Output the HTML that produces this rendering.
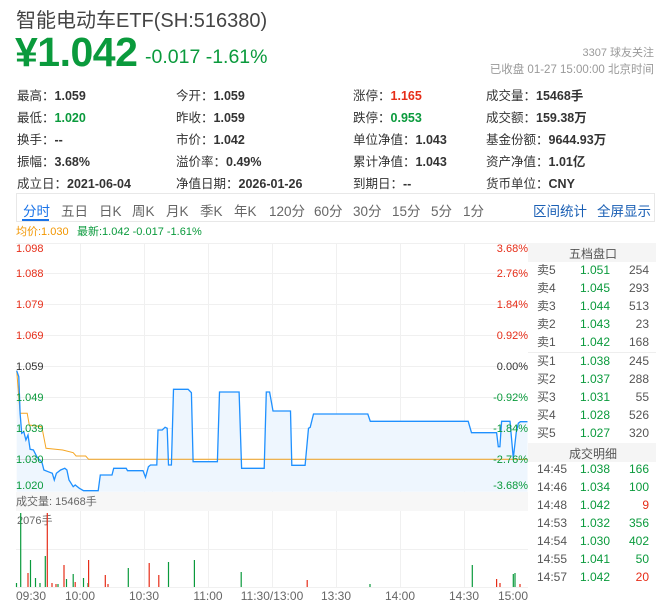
<!DOCTYPE html>
<html><head><meta charset="utf-8"><style>
*{margin:0;padding:0;box-sizing:border-box}
body{width:656px;height:615px;background:#fff;font-family:"Liberation Sans","Noto Sans CJK SC",sans-serif;color:#333;position:relative;overflow:hidden}
.a{position:absolute;white-space:nowrap}
.g{color:#0a9a3c}.r{color:#e62d18}
.info{font-size:12.5px}
.info b{font-weight:bold}
.tab{font-size:13.5px;color:#666;top:200px}
</style></head><body>
<div class="a" style="left:16px;top:4px;font-size:20px;color:#444">智能电动车ETF(SH:516380)</div>
<div class="a g" style="left:15px;top:29px;font-size:41px;font-weight:bold;letter-spacing:-0.5px">¥1.042</div>
<div class="a g" style="left:145px;top:46px;font-size:19.5px">-0.017 -1.61%</div>
<div class="a" style="right:2px;top:44px;font-size:11px;color:#999">3307 球友关注</div>
<div class="a" style="right:2px;top:61px;font-size:11.5px;color:#999">已收盘 01-27 15:00:00 北京时间</div>

<div class="info">
<div class="a" style="left:17px;top:85px">最高：<b>1.059</b></div>
<div class="a" style="left:17px;top:107px">最低：<b class="g">1.020</b></div>
<div class="a" style="left:17px;top:129px">换手：<b>--</b></div>
<div class="a" style="left:17px;top:151px">振幅：<b>3.68%</b></div>
<div class="a" style="left:17px;top:173px">成立日：<b>2021-06-04</b></div>
<div class="a" style="left:176px;top:85px">今开：<b>1.059</b></div>
<div class="a" style="left:176px;top:107px">昨收：<b>1.059</b></div>
<div class="a" style="left:176px;top:129px">市价：<b>1.042</b></div>
<div class="a" style="left:176px;top:151px">溢价率：<b>0.49%</b></div>
<div class="a" style="left:176px;top:173px">净值日期：<b>2026-01-26</b></div>
<div class="a" style="left:353px;top:85px">涨停：<b class="r">1.165</b></div>
<div class="a" style="left:353px;top:107px">跌停：<b class="g">0.953</b></div>
<div class="a" style="left:353px;top:129px">单位净值：<b>1.043</b></div>
<div class="a" style="left:353px;top:151px">累计净值：<b>1.043</b></div>
<div class="a" style="left:353px;top:173px">到期日：<b>--</b></div>
<div class="a" style="left:486px;top:85px">成交量：<b>15468手</b></div>
<div class="a" style="left:486px;top:107px">成交额：<b>159.38万</b></div>
<div class="a" style="left:486px;top:129px">基金份额：<b>9644.93万</b></div>
<div class="a" style="left:486px;top:151px">资产净值：<b>1.01亿</b></div>
<div class="a" style="left:486px;top:173px">货币单位：<b>CNY</b></div>
</div>

<div class="a" style="left:16px;top:193px;width:639px;height:29px;border:1px solid #e8e8e8"></div>
<div class="a tab" style="left:23px;color:#1a73e8">分时</div>
<div class="a" style="left:22px;top:219px;width:27px;height:2px;background:#1a73e8"></div>
<div class="a tab" style="left:61px">五日</div>
<div class="a tab" style="left:99px">日K</div>
<div class="a tab" style="left:132px">周K</div>
<div class="a tab" style="left:166px">月K</div>
<div class="a tab" style="left:200px">季K</div>
<div class="a tab" style="left:234px">年K</div>
<div class="a tab" style="left:269px">120分</div>
<div class="a tab" style="left:314px">60分</div>
<div class="a tab" style="left:353px">30分</div>
<div class="a tab" style="left:392px">15分</div>
<div class="a tab" style="left:431px">5分</div>
<div class="a tab" style="left:463px">1分</div>
<div class="a tab" style="left:533px;color:#1a5fb4">区间统计</div>
<div class="a tab" style="left:597px;color:#1a5fb4">全屏显示</div>
<div class="a" style="left:16px;top:223px;font-size:11px;color:#f29600">均价:1.030</div>
<div class="a" style="left:77px;top:223px;font-size:11px"><span style="color:#0a9a3c">最新:1.042 -0.017 -1.61%</span></div>

<svg class="a" style="left:0;top:0" width="656" height="615" font-family="Liberation Sans, Noto Sans CJK SC, sans-serif">
<g stroke="#f0f0f0" stroke-width="1">
<line x1="16" y1="243.5" x2="528" y2="243.5"/><line x1="16" y1="273.5" x2="528" y2="273.5"/><line x1="16" y1="304.5" x2="528" y2="304.5"/><line x1="16" y1="335.5" x2="528" y2="335.5"/><line x1="16" y1="366.5" x2="528" y2="366.5"/><line x1="16" y1="397.5" x2="528" y2="397.5"/><line x1="16" y1="428.5" x2="528" y2="428.5"/><line x1="16" y1="459.5" x2="528" y2="459.5"/>
<line x1="16" y1="549.5" x2="528" y2="549.5"/><line x1="16" y1="587.5" x2="528" y2="587.5"/>
<line x1="80.5" y1="243" x2="80.5" y2="492"/><line x1="144.5" y1="243" x2="144.5" y2="492"/><line x1="208.5" y1="243" x2="208.5" y2="492"/><line x1="272.5" y1="243" x2="272.5" y2="492"/><line x1="336.5" y1="243" x2="336.5" y2="492"/><line x1="400.5" y1="243" x2="400.5" y2="492"/><line x1="464.5" y1="243" x2="464.5" y2="492"/>
<line x1="80.5" y1="511" x2="80.5" y2="587"/><line x1="144.5" y1="511" x2="144.5" y2="587"/><line x1="208.5" y1="511" x2="208.5" y2="587"/><line x1="272.5" y1="511" x2="272.5" y2="587"/><line x1="336.5" y1="511" x2="336.5" y2="587"/><line x1="400.5" y1="511" x2="400.5" y2="587"/><line x1="464.5" y1="511" x2="464.5" y2="587"/>
</g>
<rect x="16" y="492" width="512" height="19" fill="#f7f7f7"/>
<rect x="528" y="243" width="128" height="19" fill="#f5f5f5"/>
<rect x="528" y="443" width="128" height="19" fill="#f5f5f5"/>
<line x1="528" y1="352.5" x2="656" y2="352.5" stroke="#eee"/>
<path d="M16.7,370.7 L18.8,376.7 20.1,413.3 21.7,433.3 23.8,431.7 25.9,440 28,435 30.1,449.3 33.4,450 36.8,456.7 39.7,460 41.8,461.7 43.9,470 48.1,471.7 52.3,473.3 54.3,480 56.4,473.3 60.6,470 64.8,468.3 66.9,470 69,480 73.2,486.7 75.2,485 79.4,488.3 83.6,490.7 98.2,490.7 100.3,475 112,475 113.7,468.3 126.2,468.3 127.5,470.7 143,470.7 145.5,477.3 148.4,466.7 150.5,465 156.8,465 158,430 162.2,430 165.1,427.3 167.2,428.3 168.5,465 171.4,465 173.5,389.3 188.1,389.3 191.4,392.7 193.1,461.7 217.4,461.7 219.5,392 239.1,392 241.6,468.3 264.2,468.3 266.3,392 269.6,392 273,411 290.5,411 291.8,465.3 305.1,465.3 308.5,428.3 310.2,427.3 313.5,414 367.8,414 370.3,421.3 468.2,421.3 471.5,432.7 496.6,432.7 498.3,446.7 499.9,446.7 501.6,421.3 510,421.3 513.3,458.3 516.2,432.7 518.3,423.3 520.4,421.7 527.5,421.7 L527.5,491.7 L16.7,491.7Z" fill="#eef6fe"/>
<line x1="16" y1="459.5" x2="528" y2="459.5" stroke="#bbb" stroke-width="0.6"/>
<polyline fill="none" stroke="#f5a623" stroke-width="1" points="16.7,370.7 20.1,413.3 27.2,413.3 29.3,425 41.8,426.7 46,448.3 62.7,450 73.2,452.7 76.1,456 85.7,456 88.6,459.3 527.5,459.3"/>
<polyline fill="none" stroke="#1e90ff" stroke-width="1.3" points="16.7,370.7 18.8,376.7 20.1,413.3 21.7,433.3 23.8,431.7 25.9,440 28,435 30.1,449.3 33.4,450 36.8,456.7 39.7,460 41.8,461.7 43.9,470 48.1,471.7 52.3,473.3 54.3,480 56.4,473.3 60.6,470 64.8,468.3 66.9,470 69,480 73.2,486.7 75.2,485 79.4,488.3 83.6,490.7 98.2,490.7 100.3,475 112,475 113.7,468.3 126.2,468.3 127.5,470.7 143,470.7 145.5,477.3 148.4,466.7 150.5,465 156.8,465 158,430 162.2,430 165.1,427.3 167.2,428.3 168.5,465 171.4,465 173.5,389.3 188.1,389.3 191.4,392.7 193.1,461.7 217.4,461.7 219.5,392 239.1,392 241.6,468.3 264.2,468.3 266.3,392 269.6,392 273,411 290.5,411 291.8,465.3 305.1,465.3 308.5,428.3 310.2,427.3 313.5,414 367.8,414 370.3,421.3 468.2,421.3 471.5,432.7 496.6,432.7 498.3,446.7 499.9,446.7 501.6,421.3 510,421.3 513.3,458.3 516.2,432.7 518.3,423.3 520.4,421.7 527.5,421.7"/>
<g font-size="11">
<text x="16" y="252" fill="#e62d18">1.098</text><text x="16" y="277" fill="#e62d18">1.088</text><text x="16" y="308" fill="#e62d18">1.079</text><text x="16" y="339" fill="#e62d18">1.069</text><text x="16" y="370" fill="#333">1.059</text><text x="16" y="401" fill="#0a9a3c">1.049</text><text x="16" y="432" fill="#0a9a3c">1.039</text><text x="16" y="463" fill="#0a9a3c">1.030</text><text x="16" y="489" fill="#0a9a3c">1.020</text>
<g text-anchor="end"><text x="528" y="252" fill="#e62d18">3.68%</text><text x="528" y="277" fill="#e62d18">2.76%</text><text x="528" y="308" fill="#e62d18">1.84%</text><text x="528" y="339" fill="#e62d18">0.92%</text><text x="528" y="370" fill="#333">0.00%</text><text x="528" y="401" fill="#0a9a3c">-0.92%</text><text x="528" y="432" fill="#0a9a3c">-1.84%</text><text x="528" y="463" fill="#0a9a3c">-2.76%</text><text x="528" y="489" fill="#0a9a3c">-3.68%</text></g>
<text x="16" y="505" fill="#666">成交量: 15468手</text>
<text x="17" y="524" fill="#666">2076手</text>
<g fill="#666" font-size="12"><text x="16" y="600">09:30</text><text x="80" y="600" text-anchor="middle">10:00</text><text x="144" y="600" text-anchor="middle">10:30</text><text x="208" y="600" text-anchor="middle">11:00</text><text x="272" y="600" text-anchor="middle">11:30/13:00</text><text x="336" y="600" text-anchor="middle">13:30</text><text x="400" y="600" text-anchor="middle">14:00</text><text x="464" y="600" text-anchor="middle">14:30</text><text x="528" y="600" text-anchor="end">15:00</text></g>
</g>
<g stroke-width="1.2">
<g stroke="#0a9a3c"><line x1="20.7" y1="587" x2="20.7" y2="513"/><line x1="16.5" y1="587" x2="16.5" y2="583"/><line x1="30.5" y1="587" x2="30.5" y2="560"/><line x1="35.5" y1="587" x2="35.5" y2="578"/><line x1="45.3" y1="587" x2="45.3" y2="556"/><line x1="66.5" y1="587" x2="66.5" y2="579"/><line x1="73.2" y1="587" x2="73.2" y2="574"/><line x1="83.5" y1="587" x2="83.5" y2="578"/><line x1="128.3" y1="587" x2="128.3" y2="568"/><line x1="168.5" y1="587" x2="168.5" y2="562"/><line x1="194.4" y1="587" x2="194.4" y2="560"/><line x1="241.2" y1="587" x2="241.2" y2="572"/><line x1="370" y1="587" x2="370" y2="584"/><line x1="472.3" y1="587" x2="472.3" y2="565"/><line x1="513.3" y1="587" x2="513.3" y2="574"/><line x1="515" y1="587" x2="515" y2="573"/><line x1="40" y1="587" x2="40" y2="583"/><line x1="58" y1="587" x2="58" y2="584"/><line x1="88" y1="587" x2="88" y2="583"/></g>
<g stroke="#e62d18"><line x1="47.3" y1="587" x2="47.3" y2="513"/><line x1="28" y1="587" x2="28" y2="573"/><line x1="64" y1="587" x2="64" y2="565"/><line x1="75.2" y1="587" x2="75.2" y2="582"/><line x1="88.6" y1="587" x2="88.6" y2="560"/><line x1="105.3" y1="587" x2="105.3" y2="575"/><line x1="149.2" y1="587" x2="149.2" y2="563"/><line x1="158.8" y1="587" x2="158.8" y2="575"/><line x1="307.2" y1="587" x2="307.2" y2="580"/><line x1="496.6" y1="587" x2="496.6" y2="579"/><line x1="52" y1="587" x2="52" y2="583"/><line x1="56" y1="587" x2="56" y2="584"/><line x1="108" y1="587" x2="108" y2="584"/><line x1="500" y1="587" x2="500" y2="583"/><line x1="520" y1="587" x2="520" y2="584"/></g>
</g>
<g font-size="12">
<text x="569" y="258" fill="#555">五档盘口</text>
<text x="569" y="458" fill="#555">成交明细</text>
<g fill="#555"><text x="537" y="274">卖5</text><text x="537" y="292">卖4</text><text x="537" y="310">卖3</text><text x="537" y="328">卖2</text><text x="537" y="346">卖1</text><text x="537" y="365">买1</text><text x="537" y="383">买2</text><text x="537" y="401">买3</text><text x="537" y="419">买4</text><text x="537" y="437">买5</text>
<text x="537" y="473">14:45</text><text x="537" y="491">14:46</text><text x="537" y="509">14:48</text><text x="537" y="527">14:53</text><text x="537" y="545">14:54</text><text x="537" y="563">14:55</text><text x="537" y="581">14:57</text></g>
<g fill="#0a9a3c"><text x="580" y="274">1.051</text><text x="580" y="292">1.045</text><text x="580" y="310">1.044</text><text x="580" y="328">1.043</text><text x="580" y="346">1.042</text><text x="580" y="365">1.038</text><text x="580" y="383">1.037</text><text x="580" y="401">1.031</text><text x="580" y="419">1.028</text><text x="580" y="437">1.027</text>
<text x="580" y="473">1.038</text><text x="580" y="491">1.034</text><text x="580" y="509">1.042</text><text x="580" y="527">1.032</text><text x="580" y="545">1.030</text><text x="580" y="563">1.041</text><text x="580" y="581">1.042</text></g>
<g text-anchor="end" fill="#555"><text x="649" y="274">254</text><text x="649" y="292">293</text><text x="649" y="310">513</text><text x="649" y="328">23</text><text x="649" y="346">168</text><text x="649" y="365">245</text><text x="649" y="383">288</text><text x="649" y="401">55</text><text x="649" y="419">526</text><text x="649" y="437">320</text></g>
<g text-anchor="end"><text x="649" y="473" fill="#0a9a3c">166</text><text x="649" y="491" fill="#0a9a3c">100</text><text x="649" y="509" fill="#e62d18">9</text><text x="649" y="527" fill="#0a9a3c">356</text><text x="649" y="545" fill="#0a9a3c">402</text><text x="649" y="563" fill="#0a9a3c">50</text><text x="649" y="581" fill="#e62d18">20</text></g>
</g>
</svg>
</body></html>
